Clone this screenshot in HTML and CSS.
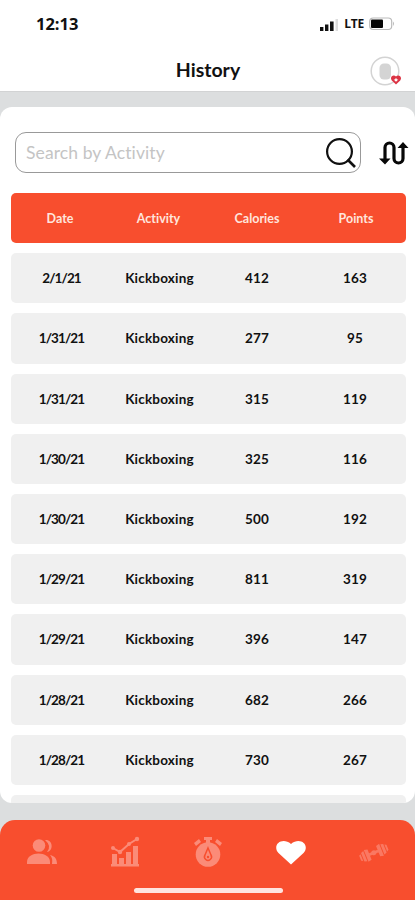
FILE: index.html
```html
<!DOCTYPE html>
<html lang="en">
<head>
<meta charset="utf-8">
<title>History</title>
<link rel="stylesheet" href="styles.css">
</head>
<body>
<div class="app">
  <header class="header">
    <div class="status">
      <span class="time">12:13</span>
      <div class="status-right">
        <svg class="signal" width="18" height="12" viewBox="0 0 18 12"><path d="M0 8h3.400v4H0zM5 5.500h3.400v6.500H5zM10 2.500h3.600v9.500H10z" fill="#111"/><path d="M15.500 0H18v12h-2.500z" fill="#ddd"/></svg>
        <span class="lte">LTE</span>
        <svg class="battery" width="26" height="14" viewBox="0 0 26 14"><rect x=".7" y="1" width="22" height="11.500" rx="3.500" fill="#fff" stroke="#bbb" stroke-width="1.200"/><rect x="2" y="2.500" width="12" height="8.500" rx="1" fill="#050505"/><path d="M24 4.500q2 2.200 0 4.500z" fill="#bbb"/></svg>
      </div>
    </div>
    <div class="titlebar">
      <h1>History</h1>
      <svg class="avatar" width="32" height="30" viewBox="0 0 32 30"><circle cx="15" cy="15" r="13.800" fill="#fff" stroke="#d3d3d3" stroke-width="1.500"/><rect x="9.500" y="7.500" width="11.500" height="16" rx="4.500" fill="#d4d4d4"/><path d="M26 28.500l-4.200-4.100c-2.500-3 1.300-6.700 4.200-3.900 2.900-2.800 6.700.9 4.200 3.900z" fill="#dc3444"/><path d="M26 25.700l-2.400-2.300h1.400l1-1.700 1 1.700h1.400z" fill="#fff"/></svg>
    </div>
  </header>
  <main class="card">
    <div class="tools">
      <div class="search"><span>Search by Activity</span>
        <svg width="32" height="32" viewBox="0 0 32 32" fill="none" stroke="#111" stroke-width="2.200"><circle cx="13.500" cy="14.500" r="12.400"/><path d="M21.500 22.500l7.500 7.500" stroke-width="2.600"/></svg>
      </div>
      <svg class="sort" width="30" height="26" viewBox="0 0 30 26" fill="none" stroke="#080808" stroke-width="3.200"><path d="M6 19V7.500a4.500 4.500 0 0 1 9 0v11a4.500 4.500 0 0 0 9 0V6"/><path d="M0 18.500h11.500L6 24.500zM18.500 8h11L24 2z" fill="#080808" stroke="none"/></svg>
    </div>
    <div class="table">
      <div class="row head"><span>Date</span><span>Activity</span><span>Calories</span><span>Points</span></div>
      <div class="row"><span class="date">2/1/21</span><span>Kickboxing</span><span>412</span><span>163</span></div>
      <div class="row"><span class="date">1/31/21</span><span>Kickboxing</span><span>277</span><span>95</span></div>
      <div class="row"><span class="date">1/31/21</span><span>Kickboxing</span><span>315</span><span>119</span></div>
      <div class="row"><span class="date">1/30/21</span><span>Kickboxing</span><span>325</span><span>116</span></div>
      <div class="row"><span class="date">1/30/21</span><span>Kickboxing</span><span>500</span><span>192</span></div>
      <div class="row"><span class="date">1/29/21</span><span>Kickboxing</span><span>811</span><span>319</span></div>
      <div class="row"><span class="date">1/29/21</span><span>Kickboxing</span><span>396</span><span>147</span></div>
      <div class="row"><span class="date">1/28/21</span><span>Kickboxing</span><span>682</span><span>266</span></div>
      <div class="row"><span class="date">1/28/21</span><span>Kickboxing</span><span>730</span><span>267</span></div>
      <div class="row"></div>
    </div>
  </main>
  <nav class="nav">
    <div class="tabs">
      <svg viewBox="0 0 32 32"><path d="M19 4c8-1 9 11 2 12q5-6-2-12zM24 19c5 1 7 4 7 9h-5q1-6-2-9z"/><circle cx="13" cy="9.500" r="6.300"/><path d="M1 28v-2c0-11.500 23-11.500 23 0v2z"/></svg>
      <svg viewBox="0 0 32 32"><path d="M3 18h5v11H3zM10 22h5v7h-5zM17 16h5v13h-5zM24 10h5v19h-5zM2 28h28v2.500H2z"/><path d="M4 12l7 4 9-8 8-5" fill="none" stroke="#fb8b78" stroke-width="2"/><circle cx="4" cy="12" r="2"/><circle cx="11" cy="16" r="2.200"/><circle cx="20" cy="8" r="2"/><circle cx="28" cy="3" r="2.200"/></svg>
      <svg viewBox="0 0 32 32"><circle cx="16" cy="18.500" r="12.300"/><path d="M12 1h8v3h-2v4h-4V4h-2zM2 7l5-4 2 3-5 4zM30 7l-5-4-2 3 5 4z"/><path d="M16 12l3 7a3.500 3.500 0 1 1-6 0z" fill="none" stroke="#f84e2e" stroke-width="1.500"/><circle cx="16" cy="21" r="1.200" fill="#f84e2e"/></svg>
      <svg class="active" viewBox="0 0 32 32"><path d="M16 28.500L3.500 17C-3.500 9 7 .500 16 8c9-7.500 19.500 1 12.500 9z"/></svg>
      <svg class="dumbbell" viewBox="0 0 32 32"><g transform="translate(1.500 1.500) rotate(-22 16 16) scale(.92)"><path d="M11 14.500h10v3H11zM7 9l4 1v12l-4 1zM3 11l3-1v12l-3-1zM0 13l2-1v8l-2-1zM25 9l-4 1v12l4 1zM29 11l-3-1v12l3-1zM32 13l-2-1v8l2-1z"/><circle cx="16" cy="16" r="2.700"/></g></svg>
    </div>
    <div class="home"></div>
  </nav>
</div>
</body>
</html>
```

FILE: styles.css
```css
* { box-sizing: border-box; }
body { margin: 0; font-family: Lato, "Open Sans", sans-serif; font-variant-ligatures: none; color: #111; }
.app { width: 415px; height: 900px; display: flex; flex-direction: column; background: #dcdedf; overflow: hidden; }
.header { height: 92px; flex: none; background: #fff; border-bottom: 1px solid #d2d3d4; }
.status { height: 48px; padding: 0 20px 0 36px; display: flex; justify-content: space-between; align-items: center; }
.time { font: 700 16.5px/20px "Open Sans", sans-serif; }
.status-right { display: flex; align-items: center; }
.signal { margin-top: 2px; }
.lte { margin: 0 5px 0 6px; font: 700 12px/16px "Open Sans", sans-serif; letter-spacing: -.2px; }
.titlebar { height: 44px; padding-right: 13px; display: grid; grid-template-columns: 45px 1fr 32px; align-items: center; }
h1 { grid-column: 2; margin: 0; padding-left: 1px; text-align: center; font-size: 19.5px; line-height: 24px; font-weight: 700; }
.avatar { grid-column: 3; margin-top: 2px; }
.card { height: 696px; flex: none; margin-top: 15px; padding: 25px 9px 0 11px; background: #fff; border-radius: 12px; overflow: hidden; }
.tools { height: 41px; padding-left: 4px; display: flex; align-items: center; }
.search { width: 346px; height: 41px; padding: 0 2px 0 10px; border: 1.5px solid #999; border-radius: 11px; display: flex; align-items: center; justify-content: space-between; color: #c4c4c4; font-size: 17.5px; letter-spacing: .1px; }
.sort { margin-left: 18px; margin-right: -6px; flex: none; }
.table { margin-top: 20px; display: flex; flex-direction: column; gap: 10px; }
.row { flex: none; height: 50.2px; padding-left: 1px; display: grid; grid-template-columns: 99px 97px 98px 98px; align-items: center; text-align: center; border-radius: 5px; background: #f0f0f0; font-size: 13.5px; font-weight: 700; letter-spacing: .2px; }
.date { letter-spacing: -.9px; }
.head { padding-left: 0; background: #f84e2e; color: #ffe5dd; font-size: 12.5px; letter-spacing: 0; grid-template-columns: 98px 99px 98px 100px; }
.nav { flex: none; height: 80px; margin-top: 17px; padding-top: 16px; background: #f84e2e; border-radius: 15px 15px 0 0; }
.tabs { height: 32px; display: flex; justify-content: space-between; padding: 0 25px 0 26px; }
.tabs svg { width: 32px; height: 32px; fill: #fb8b78; }
.tabs .active { fill: #fff; }
.tabs .dumbbell { opacity: .7; }
.home { width: 149px; height: 5px; margin: 20px auto 0; border-radius: 3px; background: #ffe4df; position: relative; left: 1px; }
```
